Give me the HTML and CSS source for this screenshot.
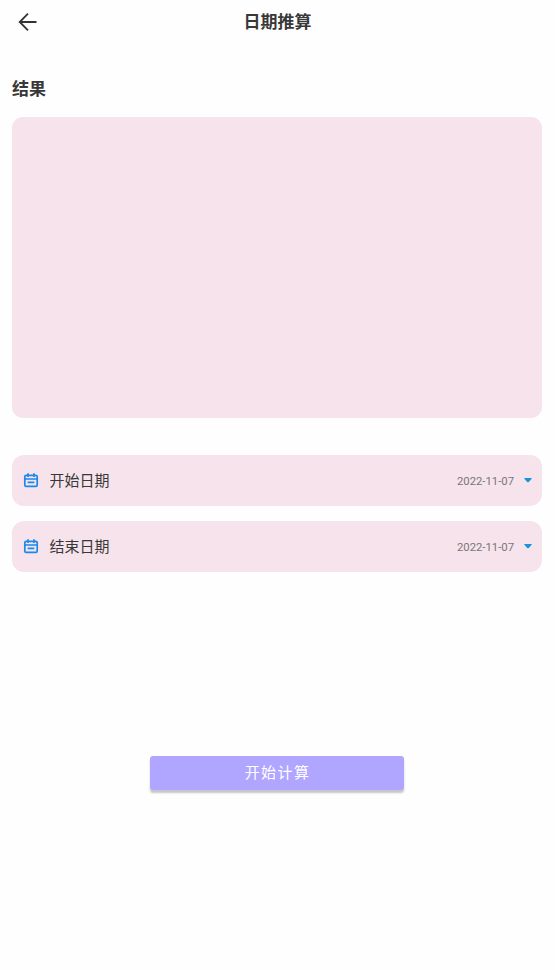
FILE: index.html
```html
<!DOCTYPE html>
<html lang="zh-CN">
<head>
    <meta charset="UTF-8">
    <meta name="viewport" content="width=device-width, initial-scale=1.0">
    <title>日期推算</title>
    <link rel="stylesheet" href="styles.css">
</head>
<body>
    <header class="header">
        <a class="back" href="#" aria-label="返回">
            <svg width="20" height="20" viewBox="0 0 20 20">
                <path d="M18.5 10H2M10 1.7L1.7 10L10 18.3"/>
            </svg>
        </a>
        <h1>日期推算</h1>
    </header>

    <main class="container">
        <h2>结果</h2>
        <div class="result"></div>

        <div class="date-row">
            <svg class="calendar" width="16" height="16" viewBox="0 0 16 16">
                <path d="M3.2 3.3H12.8Q14.2 3.3 14.2 4.7V13Q14.2 14.4 12.8 14.4H3.2Q1.8 14.4 1.8 13V4.7Q1.8 3.3 3.2 3.3ZM1.8 7H14.2M5 1.2V5M11 1.2V5M4.7 10.4H11.3"/>
            </svg>
            <span class="label">开始日期</span>
            <span class="date">2022-11-07</span>
            <svg class="arrow" width="8" height="5" viewBox="0 0 8 5">
                <path d="M0.7 0H7.3Q8.3 0 7.6 0.8L4.8 3.9Q4 4.8 3.2 3.9L0.4 0.8Q-0.3 0 0.7 0Z"/>
            </svg>
        </div>

        <div class="date-row">
            <svg class="calendar" width="16" height="16" viewBox="0 0 16 16">
                <path d="M3.2 3.3H12.8Q14.2 3.3 14.2 4.7V13Q14.2 14.4 12.8 14.4H3.2Q1.8 14.4 1.8 13V4.7Q1.8 3.3 3.2 3.3ZM1.8 7H14.2M5 1.2V5M11 1.2V5M4.7 10.4H11.3"/>
            </svg>
            <span class="label">结束日期</span>
            <span class="date">2022-11-07</span>
            <svg class="arrow" width="8" height="5" viewBox="0 0 8 5">
                <path d="M0.7 0H7.3Q8.3 0 7.6 0.8L4.8 3.9Q4 4.8 3.2 3.9L0.4 0.8Q-0.3 0 0.7 0Z"/>
            </svg>
        </div>

        <button class="submit" type="button">开始计算</button>
    </main>
</body>
</html>
```

FILE: styles.css
```css
* {
    box-sizing: border-box;
}
body {
    margin: 0;
    min-height: 970px;
    background-color: #fefefe;
    color: #383838;
    font-family: Roboto, "Noto Sans CJK SC", sans-serif;
}
h1, h2 {
    margin: 0;
    font-size: 17px;
    line-height: 24px;
    font-weight: bold;
}
.header {
    display: grid;
    grid-template-columns: 44px 1fr 44px;
    align-items: center;
    height: 44px;
    text-align: center;
}
.back {
    display: flex;
    padding-left: 18px;
}
.back path {
    fill: none;
    stroke: #333;
    stroke-width: 1.8;
}
.container {
    display: flex;
    flex-direction: column;
    padding: 33px 13px 0 12px;
}
.result {
    height: 300.5px;
    margin: 16px 0 37.5px;
    border-radius: 11px;
    background-color: #f6e3eb;
}
.date-row {
    display: flex;
    align-items: center;
    height: 51px;
    margin-bottom: 15px;
    padding: 0 10px 0 11px;
    border-radius: 12px;
    background-color: #f6e3eb;
}
.calendar {
    margin-bottom: 2px;
}
.calendar path {
    fill: none;
    stroke: #1989ed;
    stroke-width: 1.7;
}
.label {
    margin-left: 10.5px;
    padding-bottom: 2px;
    font-size: 15px;
}
.date {
    margin-left: auto;
    padding-top: 2px;
    color: #777;
    font-size: 11.3px;
}
.arrow {
    margin-left: 10px;
    fill: #1495db;
}
.submit {
    align-self: center;
    width: 254px;
    height: 34px;
    margin-top: 169px;
    padding: 0 0 3px 1px;
    border: none;
    border-radius: 3px;
    background-color: #b0a5ff;
    box-shadow: 0 3px 2px rgba(0, 0, 0, 0.22);
    color: #fff;
    font-family: inherit;
    font-size: 15px;
    letter-spacing: 1.4px;
    cursor: pointer;
}
```
